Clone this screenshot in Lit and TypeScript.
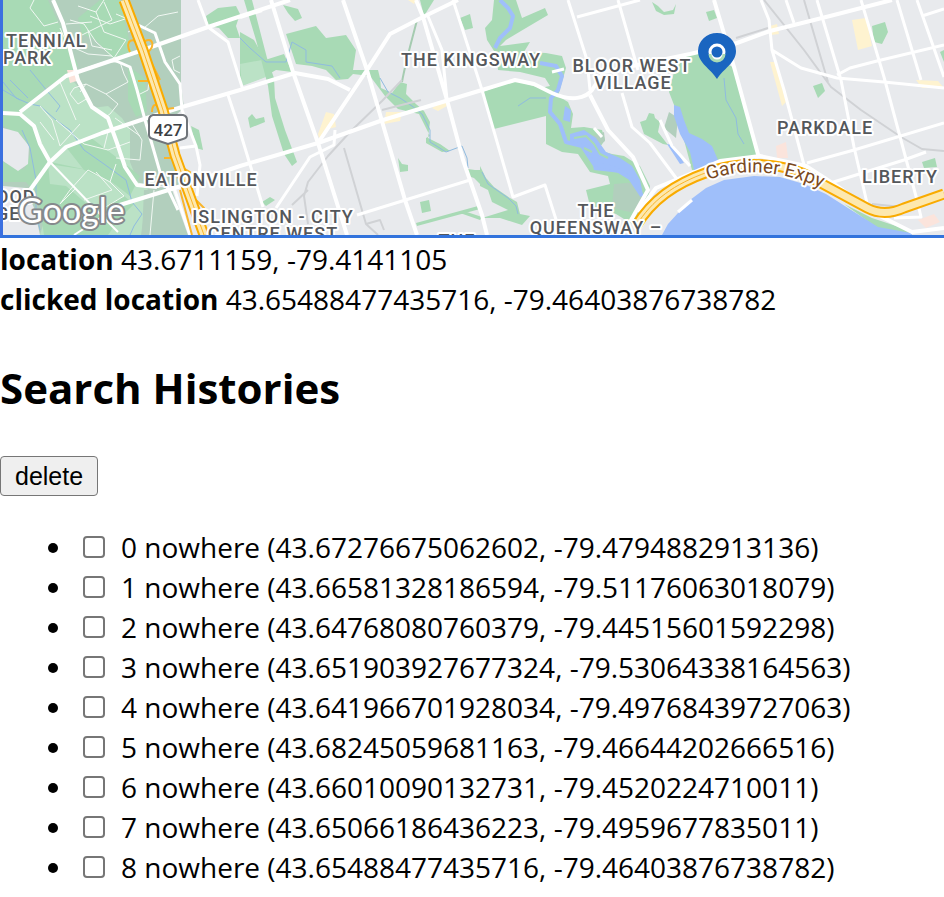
import { LitElement, html, css, svg } from "lit";
import { customElement, state } from "lit/decorators.js";

interface History {
  id: number;
  lat: string;
  lng: string;
}

const HISTORIES: History[] = [
  { id: 0, lat: "43.67276675062602", lng: "-79.4794882913136" },
  { id: 1, lat: "43.66581328186594", lng: "-79.51176063018079" },
  { id: 2, lat: "43.64768080760379", lng: "-79.44515601592298" },
  { id: 3, lat: "43.651903927677324", lng: "-79.53064338164563" },
  { id: 4, lat: "43.641966701928034", lng: "-79.49768439727063" },
  { id: 5, lat: "43.68245059681163", lng: "-79.46644202666516" },
  { id: 6, lat: "43.66010090132731", lng: "-79.4520224710011" },
  { id: 7, lat: "43.65066186436223", lng: "-79.4959677835011" },
  { id: 8, lat: "43.65488477435716", lng: "-79.46403876738782" },
];

const land = svg`
  <path class="suburb" d="M3 0H181V15L181 84 184 108 170 120 186 180 200 235H3Z"/>
  <path class="park" d="M3 0H48L60 26 78 65 72 75 48 86 20 112 3 114Z"/>
  <path class="park" d="M78 18L100 0H120L128 35 132 52 112 58 96 40 82 34Z M128 66L145 78 147 112 136 117 128 100Z"/>
  <path class="meadow" d="M20 112L66 75 76 84 92 108 108 106 122 118 130 130V162L138 182 148 187 141 235H40L52 195 30 150Z"/>
  <path class="park" d="M3 116L20 114 34 126 48 160 50 162 88 170 112 182 124 196 134 204 120 218 108 235H44L38 196 26 182 3 182 3 162 24 170 31 152 22 136 3 126Z"/>
  <path class="meadow" d="M48 164L88 170 112 182 124 196 96 212 66 186 50 184Z"/>
  <path class="park" d="M84 170L66 147 90 137 120 160 140 176 130 196 112 182Z"/>
  <path class="land" d="M3 128L18 132 29 146 28 164 18 171 3 161Z M3 186L26 188 34 208 40 235H3Z M147 186L170 188 182 235 200 235 186 185Z"/>
  <path class="suburb" d="M144 190L172 190 188 235H142Z"/>
  <path class="park" d="M191 126L199 130 203 150 196 148Z"/>
  <path class="park" d="M206 16L218 8 236 6 240 14 236 26 240 38H228L219 28 208 26Z"/>
  <path class="park" d="M240 32L254 40 265 60 284 54 292 72 276 70 262 78 240 86Z"/>
  <path class="meadow" d="M240 64L262 60 266 77 242 86Z"/>
  <path class="park" d="M244 0H252L267 58 274 78 275 98 285 130 297 162 292 166 284 154 272 116 268 86 256 40Z"/>
  <path class="park" d="M283 5L298 9 302 18 295 21 288 13Z M248 118L252 114 256 119 264 117 265 122 250 128Z M262 202L270 197 275 200 266 206Z"/>
  <path class="park" d="M286 34L316 26 326 38 346 35 356 50 353 70 367 70 378 70 380 78 381 88 392 93 400 82 407 84 406 94 416 104 424 111 430 122 428 138 440 144 450 151 442 152 426 143 426 138 430 136 419 114 398 109 385 96 370 76 353 74 348 79 336 80 326 70 312 66 296 64Z"/>
  <path class="park" d="M420 0H434L424 16Z M460 18L470 14 473 28 465 30Z M398 158L402 164 408 165 408 171 400 172Z M420 202L429 200 431 211 422 213Z M416 223L478 206 480 209 417 226Z M464 211L482 217 480 220 460 213Z"/>
  <path class="rail green" d="M417 20C412 40 406 60 402 82"/>
  <path class="park" d="M494 0H516L522 18 545 8 548 15 526 28 506 40 500 46 530 42 524 52 546 53 562 56 566 68 562 82 558 96 568 102 573 114 571 128 584 127 602 130 605 140 598 150 612 154 624 156 640 166 650 186 648 205 632 224 616 214 590 206 586 190 610 184 608 176 590 172 578 154 562 152 546 144 546 116 494 129 483 92 514 80 540 88 550 86 545 78 520 72 498 70 496 54 487 40 485 28 492 20Z"/>
  <path class="suburb" d="M604 132L605 141 598 146 590 137Z M614 184L640 182 644 204 630 212 612 208Z"/>
  <path class="park" d="M480 166L486 178 494 187 510 198 517 202 520 214 530 216 522 225 500 218 482 218 508 210 492 202 488 190 480 186Z M482 170L482 186 474 178 468 176 468 169 475 170Z"/>
  <path class="park" d="M652 2L658 6 664 12 673 10 676 4 674 14 664 15 656 11Z M706 12L714 10 717 18 709 21Z"/>
  <path class="park" d="M640 122L646 120 649 113 654 114 655 118 660 122 658 132 668 145 663 144 644 134Z"/>
  <path class="suburb" d="M669 112L678 118 676 138 664 128Z"/>
  <path class="park" d="M678 56L700 52 733 67 759 155 744 168 692 170 676 110 669 92Z"/>
  <path class="park" d="M813 86L822 83 825 91 818 98Z M872 26L885 22 888 32 882 44 874 42Z M922 162L935 158 937 167 924 168Z M940 52L944 50V62Z M844 204L872 218 908 230 912 235 880 230Z"/>
  <path class="sand" d="M852 20L866 18 872 46 858 50Z M326 112L334 114 336 127 324 130 320 142 318 134Z M386 112L402 112 400 121 384 124Z M432 108L446 100 447 106 438 111Z M408 0H416L414 4Z M770 26L777 24 779 34 771 35Z M770 62L776 62 786 102 782 106Z M916 80L938 81 944 88 922 88Z"/>
  <path class="peach" d="M67 70L76 70 80 80 70 83Z M776 146L786 142 788 158 777 158Z M918 220L934 214 940 222 926 228Z"/>`;

const water = svg`
  <path class="lake" d="M662 235L668 224 678 213 690 200 706 188 724 180 754 176 780 177 804 184 826 194 848 208 878 227 911 233 912 235Z"/>
  <path class="lake" d="M674 105L680 107 684 120 689 133 702 139 712 146 718 160 722 170 694 170 690 152 680 134 674 116Z M667 144L673 145 684 163 680 164Z"/>
  <path class="lake" d="M565 106L571 110 570 122 563 120Z M570 134L584 130 596 138 606 152 620 158 632 166 640 180 644 200 638 190 626 174 612 172 594 170 590 154 580 146 570 142Z"/>
  <path class="river" d="M500 0L508 8 513 16 510 28 500 38 495 48M540 63L556 66 562 76 558 90 551 98 550 112 560 124 566 142 582 146 594 164 614 168 630 178 642 196"/>
  <path class="islet" d="M574 138L586 136 594 144 600 154 608 158M584 148L592 152"/>
  <path class="stream" d="M3 82L16 98 30 104 40 106 56 120 70 130 84 150 104 164 126 180 132 202 142 214 134 226 130 235M3 90L20 100M10 80L28 98M30 70L48 92 60 106 56 112M22 130L30 148 36 180 36 212 40 230M240 38L250 48 266 62 286 62 292 42 306 50 306 62 332 66 340 78M380 78L388 92 400 98 412 106 422 114 430 130 430 142 446 152 462 146 467 158 468 168M518 106L530 98 546 98M482 172L488 184 508 198 516 206 518 214M724 78L726 100 736 118 738 134 744 144"/>`;

const fineStreets = svg`
  <path class="fine" d="M34 0L30 8 44 26 58 22M78 6L96 12 104 0M96 12L104 32 126 40 114 58 96 42 84 24 70 20M82 35L112 20 104 2M90 16L110 24 128 18M66 24L92 22M60 28L68 46M88 30L92 46 112 50M80 70L104 62 120 62 124 74 128 82 106 94 86 84 74 88 70 94 78 104 88 98M86 84L80 92M106 94L118 104 110 114 104 118M60 82L76 120M40 106L52 120 60 146M56 120L84 144 108 150 130 142M80 124L60 146M108 132L104 148M115 118L140 136M132 124L142 140 140 160 116 158M116 164L110 182 88 170 70 190 60 204M110 182L124 196 104 208M96 172L112 190 84 200M150 70L148 90 140 94M128 32L140 26M116 14L130 20M180 56L172 60 174 70 180 73M40 122L54 140M154 190L150 235M60 204L76 188M144 28L158 16 178 12M70 46L88 54 112 56"/>
  <path class="road minor" d="M50 162L100 214 118 232M74 235L122 204"/>`;

const rails = svg`
  <path class="rail" d="M402 80L382 101 350 132 328 156 308 182 304 196 308 224M308 190L292 205M344 148L366 224 378 235M366 224L380 220 384 230M421 100L382 110M764 0L804 50 831 87 861 110 901 137 922 149 944 151M804 0L828 82M736 38L768 28M872 204L912 208"/>`;

const roads = svg`
  <path class="road major" d="M53 0L63 23 78 80 92 107 108 118 117 143 125 167 137 185 157 187M20 112L66 76 140 51 208 27 290 0M240 17L262 10M30 190L50 162 66 147 102 133 150 117 182 107 240 90 295 73 328 79 350 90M110 208L175 188 240 166 318 143 383 120 482 90 515 80 534 84 552 93C572 102 586 98 592 90L604 72 690 54 737 43 770 31 830 16 892 0"/>
  <path class="road major" d="M3 113L20 114 34 126 40 144 50 162M271 0L293 72 318 143 347 235M343 0L367 70 405 200 417 235M416 0L423 17 447 100 463 160 482 215 487 235M458 0L423 17 390 34 367 70 318 143M590 95L608 130 633 157 648 190 630 222M714 0L734 67 759 158"/>
  <path class="road" d="M198 0L208 27 228 42 243 90M138 25L155 33 165 62 180 84 182 110 196 146 200 165 197 196M114 60L130 67 137 90 145 120 160 172 178 210M180 148L196 146M228 95L238 125 263 207M335 130L334 145 310 157 276 208M357 215L470 180M427 14L442 50 447 100M453 0L482 90 513 197 545 185 560 232M568 0L587 60 590 90M577 17L640 0M618 0L638 70M622 93L632 127 650 143 682 186M660 120L672 146 690 166M594 128L602 137M172 182L190 235M552 72L564 69"/>
  <path class="road" d="M761 0L769 20 772 50 784 90 804 165M772 50L801 68 837 78 884 82 944 88M817 0L841 80 854 147 867 203M861 0L884 77 917 200 921 217 894 218M897 0L921 80M917 0L944 77M837 75L850 68 877 61 944 45M807 163L854 150 944 123M824 185L904 160 926 152M786 0L794 23M922 16L944 9"/>
  <path class="road major" d="M638 212L656 188 690 174 720 161 760 156 806 166 840 188 876 214 912 232 944 228"/>
  <path class="road" d="M678 212L692 200"/>
  <path class="ramp" d="M130 52C124 40 134 36 140 46M140 56C160 50 152 32 142 44M138 81H150M152 112C152 100 160 106 164 112M160 110L174 108M164 158L178 158M178 165L190 172 188 182M196 200L204 208 198 216M180 190L192 235M150 60L160 80"/>
  <path class="express-edge" d="M124 0L143 50 163 110 175 155 204 235M636 226C652 200 674 184 708 172C740 160 790 162 817 181L867 208Q884 217 904 208L944 194"/>
  <path class="express-fill" d="M124 0L143 50 163 110 175 155 204 235M636 226C652 200 674 184 708 172C740 160 790 162 817 181L867 208Q884 217 904 208L944 194"/>
  <path class="express-line" d="M124 0L143 50 163 110 175 155 204 235M636 226C652 200 674 184 708 172"/>`;

const labels = svg`
  <text class="label" x="6" y="47">TENNIAL</text>
  <text class="label" x="3" y="64">PARK</text>
  <text class="label" x="-4" y="203">OOD</text>
  <text class="label" x="-4" y="220">GE</text>
  <g class="label middle">
    <text x="471" y="66">THE KINGSWAY</text>
    <text x="632" y="72">BLOOR WEST</text>
    <text x="633" y="89">VILLAGE</text>
    <text x="825" y="134">PARKDALE</text>
    <text x="900" y="183">LIBERTY</text>
    <text x="201" y="186">EATONVILLE</text>
    <text x="273" y="223">ISLINGTON - CITY</text>
    <text x="273" y="240">CENTRE WEST</text>
    <text x="457" y="247">THE</text>
    <text x="596" y="217">THE</text>
    <text x="596" y="234">QUEENSWAY –</text>
  </g>
  <path id="gardiner" fill="none" d="M708 180Q764 160 830 192"/>
  <text class="street"><textPath href="#gardiner">Gardiner Expy</textPath></text>
  <path class="shield" d="M153 115H183Q187 116 187 120V135Q187 138 183 139L168 144 153 139Q149 138 149 135V120Q149 116 153 115Z"/>
  <text class="route" x="168" y="136">427</text>
  <text class="google" x="18" y="223">Google</text>`;

@customElement("area-map")
export class AreaMap extends LitElement {
  static styles = css`
    :host {
      display: block;
      border-left: 3px solid #3b70e0;
      border-bottom: 3px solid #3273dc;
    }
    .map {
      display: block;
      width: 100%;
      height: 235px;
      background: #e8eaed;
    }
    .land { fill: #e8eaed; }
    .suburb { fill: #b2cfbd; }
    .park { fill: #a8dab5; }
    .meadow { fill: #bbe2c6; }
    .sand { fill: #fef3d0; }
    .peach { fill: #fbe4dc; }
    .lake { fill: #9fbffa; }
    .river, .stream, .islet, .fine, .rail, .road, .ramp,
    .express-edge, .express-fill, .express-line {
      fill: none;
      stroke-linejoin: round;
    }
    .river { stroke: #9fbffa; stroke-width: 4px; }
    .islet { stroke: #a8dab5; stroke-width: 2px; }
    .stream { stroke: #8fbbe0; stroke-width: 1px; }
    .fine { stroke: #f1f8f3; stroke-width: 1px; }
    .rail { stroke: #d0d2d5; stroke-width: 2px; }
    .green { stroke: #a5cbb0; }
    .road { stroke: #fff; stroke-width: 3px; }
    .minor { stroke-width: 2px; }
    .major { stroke-width: 4px; }
    .ramp { stroke: #f9b52c; stroke-width: 2px; }
    .express-edge { stroke: #f9ab00; stroke-width: 11px; }
    .express-fill { stroke: #fde8ae; stroke-width: 7px; }
    .express-line { stroke: #f9b52c; stroke-width: 1px; }
    .label {
      font: 500 18px Roboto, sans-serif;
      letter-spacing: 1px;
      fill: #54575b;
      stroke: #fff;
      stroke-width: 4px;
      stroke-linejoin: round;
      paint-order: stroke;
    }
    .middle { text-anchor: middle; }
    .street {
      font: 400 19px Roboto, sans-serif;
      fill: #7b4a1e;
      stroke: #fff;
      stroke-width: 4px;
      stroke-linejoin: round;
      paint-order: stroke;
    }
    .shield { fill: #fff; stroke: #70757a; stroke-width: 2px; }
    .route {
      font: 500 17px Roboto, sans-serif;
      text-anchor: middle;
      fill: #3c4043;
    }
    .google {
      font: 400 34px Lato, sans-serif;
      fill: #fff;
      stroke: #85898c;
      stroke-width: 4px;
      stroke-linejoin: round;
      paint-order: stroke;
    }
    .pin { fill: #1a65c0; fill-rule: evenodd; }
    .ring { fill: none; stroke: #fff; stroke-width: 3px; }
    .ring-shade { fill: none; stroke: #a8dab5; stroke-width: 3px; }
  `;

  render() {
    return html`
      <svg class="map" viewBox="3 0 941 235" preserveAspectRatio="xMinYMin slice" role="img" aria-label="Map">
        ${land}${water}${fineStreets}${rails}${roads}${labels}
        <path class="pin" d="M717 79C711 69 698 63 698 51A19 18 0 0 1 736 51C736 63 723 69 717 79Z" />
        <circle class="ring" cx="717" cy="52" r="7" />
        <path class="ring-shade" d="M710 54A7 7 0 0 0 724 54" />
      </svg>
    `;
  }
}

@customElement("app-root")
export class AppRoot extends LitElement {
  @state() private histories = HISTORIES;
  private selected = new Set<number>();

  static styles = css`
    :host {
      display: block;
      overflow-x: hidden;
      color: #000;
      background: #fff;
      font: 28px/40px "Open Sans", "Noto Sans", sans-serif;
    }
    .place { padding-top: 1px; }
    .title {
      margin: 39px 0 38px;
      font-size: 42px;
      line-height: 60px;
      font-weight: 700;
    }
    .delete {
      display: block;
      height: 40px;
      padding: 0 14px;
      border: 1px solid #767676;
      border-radius: 4px;
      background: #efefef;
      color: #000;
      font: 25px "Liberation Sans", Arial, sans-serif;
    }
    .list {
      margin: 31px 0 28px;
      padding-left: 75px;
    }
    .item {
      white-space: nowrap;
    }
    .check {
      appearance: none;
      box-sizing: border-box;
      width: 22px;
      height: 22px;
      margin: 0 16px 0 8px;
      vertical-align: baseline;
      border: 2px solid #767676;
      border-radius: 4px;
      background: #fff;
    }
    .check:checked {
      background: #0075ff;
      border-color: #0075ff;
    }
  `;

  private toggle(id: number) {
    if (!this.selected.delete(id)) this.selected.add(id);
  }

  private removeSelected() {
    this.histories = this.histories.filter((h) => !this.selected.has(h.id));
    this.selected.clear();
  }

  render() {
    return html`
      <area-map></area-map>
      <div class="place">
        <div><b>location</b> 43.6711159, -79.4141105</div>
        <div><b>clicked location</b> 43.65488477435716, -79.46403876738782</div>
      </div>
      <h2 class="title">Search Histories</h2>
      <button class="delete" type="button" @click=${this.removeSelected}>delete</button>
      <ul class="list">
        ${this.histories.map(
          (h) => html`<li class="item"><label><input class="check" type="checkbox" @change=${() => this.toggle(h.id)} />${h.id} nowhere (${h.lat}, ${h.lng})</label></li>`
        )}
      </ul>
    `;
  }
}
